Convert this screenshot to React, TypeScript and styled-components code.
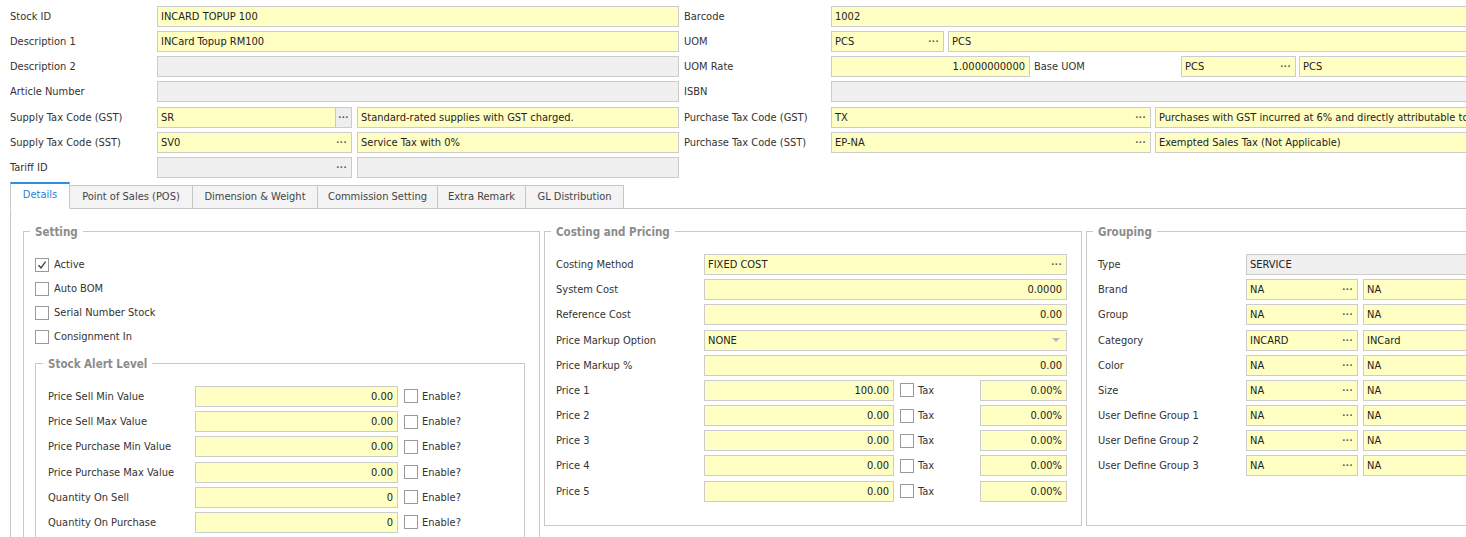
import React from "react";
import styled, { createGlobalStyle } from "styled-components";

const GlobalStyle = createGlobalStyle`
  html, body {
    margin: 0;
    padding: 0;
    background: #ffffff;
    overflow: hidden;
  }
  body {
    font-family: "DejaVu Sans Condensed", "DejaVu Sans", Tahoma, sans-serif;
    font-size: 11px;
    color: #333333;
  }
`;

const Page = styled.div`
  width: 1480px;
  height: 537px;
  overflow: hidden;
  padding: 6px 0 0 10px;
  box-sizing: border-box;
`;

const TopForm = styled.div`
  display: flex;
  gap: 5px;
`;

const FormColumn = styled.div<{ $w: number }>`
  display: flex;
  flex-direction: column;
  gap: 4.17px;
  width: ${(p) => p.$w}px;
  flex: 0 0 auto;
`;

const Row = styled.div<{ $label?: number }>`
  display: grid;
  grid-template-columns: ${(p) => p.$label ?? 147}px 1fr;
  align-items: center;
  height: 21px;
`;

const Label = styled.span`
  white-space: nowrap;
  color: #333;
`;

const Pair = styled.div<{ $first: number; $gap?: number }>`
  display: grid;
  grid-template-columns: ${(p) => p.$first}px 1fr;
  column-gap: ${(p) => p.$gap ?? 5}px;
  height: 21px;
  min-width: 0;
`;

const Field = styled.div<{ $gray?: boolean; $right?: boolean }>`
  box-sizing: border-box;
  height: 21px;
  border: 1px solid #cccccc;
  background: ${(p) => (p.$gray ? "#f0f0f0" : "#ffffc4")};
  display: flex;
  align-items: center;
  justify-content: ${(p) => (p.$right ? "flex-end" : "space-between")};
  padding: 0 4px 0 3px;
  white-space: nowrap;
  overflow: hidden;
  min-width: 0;
  color: #222;
`;

const Dots = styled.span<{ $btn?: boolean }>`
  flex: 0 0 auto;
  font-weight: bold;
  color: #555;
  font-size: 9px;
  letter-spacing: 0.5px;
  line-height: 1;
  ${(p) =>
    p.$btn
      ? `
    background: #eeeeee;
    border-left: 1px solid #c8c8c8;
    height: 19px;
    width: 15px;
    margin-right: -4px;
    display: flex;
    align-items: center;
    justify-content: center;
  `
      : ""}
`;

const Arrow = styled.span`
  width: 0;
  height: 0;
  border-left: 4px solid transparent;
  border-right: 4px solid transparent;
  border-top: 4px solid #b8b8b8;
  margin-right: 2px;
`;

const UomRateRow = styled.div`
  display: grid;
  grid-template-columns: 199px 151px 1fr;
  align-items: center;
  height: 21px;
`;

const InlineLabel = styled.span`
  padding-left: 4px;
  white-space: nowrap;
`;

/* tabs */

const TabStrip = styled.div`
  display: flex;
  align-items: flex-end;
  margin-top: 5px;
  height: 26px;
  position: relative;
  z-index: 1;
  margin-bottom: -1px;
`;

const Tab = styled.div<{ $active?: boolean; $w: number }>`
  box-sizing: border-box;
  width: ${(p) => p.$w}px;
  height: ${(p) => (p.$active ? 27 : 24)}px;
  display: flex;
  align-items: center;
  justify-content: center;
  border: 1px solid #c6c6c6;
  border-left: ${(p) => (p.$active ? "1px solid #c6c6c6" : "none")};
  border-top: ${(p) => (p.$active ? "2px solid #2f8fe3" : "1px solid #c6c6c6")};
  border-bottom: ${(p) => (p.$active ? "1px solid #ffffff" : "1px solid #c6c6c6")};
  background: ${(p) => (p.$active ? "#ffffff" : "#f3f3f3")};
  color: ${(p) => (p.$active ? "#2a7fd4" : "#444")};
  white-space: nowrap;
  padding-bottom: ${(p) => (p.$active ? 3 : 0)}px;
`;

const TabPanel = styled.div`
  border-top: 1px solid #c6c6c6;
  border-left: 1px solid #c6c6c6;
  padding: 16px 0 0 12px;
  display: flex;
  align-items: flex-start;
`;

const Group = styled.fieldset<{ $w: number; $h?: number; $mr?: number }>`
  box-sizing: border-box;
  width: ${(p) => p.$w}px;
  ${(p) => (p.$h ? `height: ${p.$h}px;` : "")}
  margin: 0 ${(p) => p.$mr ?? 0}px 0 0;
  border: 1px solid #c9c9c9;
  padding: 15px 14px 10px 11px;
  flex: 0 0 auto;
  min-width: 0;
`;

const Legend = styled.legend`
  margin-left: -5px;
  padding: 0 5px;
  font-weight: bold;
  font-size: 11.5px;
  color: #8c8c8c;
  line-height: 14px;
`;

const InnerGroup = styled.fieldset`
  box-sizing: border-box;
  margin: 11px 0 0 0;
  border: 1px solid #c9c9c9;
  padding: 15px 12px 10px 12px;
  min-width: 0;
`;

const Stack = styled.div<{ $gap: number; $top?: number }>`
  display: flex;
  flex-direction: column;
  gap: ${(p) => p.$gap}px;
  margin-top: ${(p) => p.$top ?? 0}px;
`;

const CheckRow = styled.label`
  display: flex;
  align-items: center;
  gap: 5px;
  height: 18px;
  white-space: nowrap;
`;

const Box = styled.span`
  box-sizing: border-box;
  width: 14px;
  height: 14px;
  border: 1px solid #9a9a9a;
  background: #ffffff;
  display: inline-flex;
  align-items: center;
  justify-content: center;
  flex: 0 0 auto;
`;

const AlertRow = styled.div`
  display: grid;
  grid-template-columns: 147px 203px auto;
  align-items: center;
  height: 21px;
`;

const TrailCheck = styled.div`
  display: flex;
  align-items: center;
  gap: 4px;
  padding-left: 6px;
  box-sizing: border-box;
`;

const PriceRow = styled.div`
  display: grid;
  grid-template-columns: 148px 190px 1fr 87px;
  align-items: center;
  height: 21px;
`;

const CheckBox: React.FC<{ checked?: boolean }> = ({ checked }) => (
  <Box>
    {checked && (
      <svg width="10" height="10" viewBox="0 0 10 10">
        <path d="M1.5 5.2 L4 7.8 L8.6 1.6" stroke="#444" strokeWidth="1.4" fill="none" />
      </svg>
    )}
  </Box>
);

const settingChecks = [
  { label: "Active", checked: true },
  { label: "Auto BOM" },
  { label: "Serial Number Stock" },
  { label: "Consignment In" },
];

const alerts = [
  ["Price Sell Min Value", "0.00"],
  ["Price Sell Max Value", "0.00"],
  ["Price Purchase Min Value", "0.00"],
  ["Price Purchase Max Value", "0.00"],
  ["Quantity On Sell", "0"],
  ["Quantity On Purchase", "0"],
];

const prices = [
  ["Price 1", "100.00"],
  ["Price 2", "0.00"],
  ["Price 3", "0.00"],
  ["Price 4", "0.00"],
  ["Price 5", "0.00"],
];

const groupings = [
  ["Brand", "NA", "NA"],
  ["Group", "NA", "NA"],
  ["Category", "INCARD", "INCard"],
  ["Color", "NA", "NA"],
  ["Size", "NA", "NA"],
  ["User Define Group 1", "NA", "NA"],
  ["User Define Group 2", "NA", "NA"],
  ["User Define Group 3", "NA", "NA"],
];

const tabs = [
  { label: "Details", w: 60, active: true },
  { label: "Point of Sales (POS)", w: 123 },
  { label: "Dimension & Weight", w: 125 },
  { label: "Commission Setting", w: 120 },
  { label: "Extra Remark", w: 88 },
  { label: "GL Distribution", w: 98 },
];

const App: React.FC = () => {
  return (
    <Page>
      <GlobalStyle />
      <TopForm>
        <FormColumn $w={669}>
          <Row>
            <Label>Stock ID</Label>
            <Field>INCARD TOPUP 100</Field>
          </Row>
          <Row>
            <Label>Description 1</Label>
            <Field>INCard Topup RM100</Field>
          </Row>
          <Row>
            <Label>Description 2</Label>
            <Field $gray />
          </Row>
          <Row>
            <Label>Article Number</Label>
            <Field $gray />
          </Row>
          <Row>
            <Label>Supply Tax Code (GST)</Label>
            <Pair $first={195}>
              <Field>
                SR<Dots $btn>···</Dots>
              </Field>
              <Field>Standard-rated supplies with GST charged.</Field>
            </Pair>
          </Row>
          <Row>
            <Label>Supply Tax Code (SST)</Label>
            <Pair $first={195}>
              <Field>
                SV0<Dots>···</Dots>
              </Field>
              <Field>Service Tax with 0%</Field>
            </Pair>
          </Row>
          <Row>
            <Label>Tariff ID</Label>
            <Pair $first={195}>
              <Field $gray>
                <span />
                <Dots>···</Dots>
              </Field>
              <Field $gray />
            </Pair>
          </Row>
        </FormColumn>
        <FormColumn $w={796}>
          <Row>
            <Label>Barcode</Label>
            <Field>1002</Field>
          </Row>
          <Row>
            <Label>UOM</Label>
            <Pair $first={113} $gap={4}>
              <Field>
                PCS<Dots>···</Dots>
              </Field>
              <Field>PCS</Field>
            </Pair>
          </Row>
          <Row>
            <Label>UOM Rate</Label>
            <UomRateRow>
              <Field $right>1.0000000000</Field>
              <InlineLabel>Base UOM</InlineLabel>
              <Pair $first={115} $gap={3}>
                <Field>
                  PCS<Dots>···</Dots>
                </Field>
                <Field>PCS</Field>
              </Pair>
            </UomRateRow>
          </Row>
          <Row>
            <Label>ISBN</Label>
            <Field $gray />
          </Row>
          <Row>
            <Label>Purchase Tax Code (GST)</Label>
            <Pair $first={320} $gap={4}>
              <Field>
                TX<Dots>···</Dots>
              </Field>
              <Field>Purchases with GST incurred at 6% and directly attributable to taxable supplies.</Field>
            </Pair>
          </Row>
          <Row>
            <Label>Purchase Tax Code (SST)</Label>
            <Pair $first={320} $gap={4}>
              <Field>
                EP-NA<Dots>···</Dots>
              </Field>
              <Field>Exempted Sales Tax (Not Applicable)</Field>
            </Pair>
          </Row>
        </FormColumn>
      </TopForm>

      <TabStrip>
        {tabs.map((t) => (
          <Tab key={t.label} $w={t.w} $active={t.active}>
            {t.label}
          </Tab>
        ))}
      </TabStrip>
      <TabPanel>
        <Group $w={517} $mr={4}>
          <Legend>Setting</Legend>
          <Stack $gap={6} $top={2}>
            {settingChecks.map((c) => (
              <CheckRow key={c.label}>
                <CheckBox checked={c.checked} />
                {c.label}
              </CheckRow>
            ))}
          </Stack>
          <InnerGroup>
            <Legend>Stock Alert Level</Legend>
            <Stack $gap={4.2}>
              {alerts.map(([label, value]) => (
                <AlertRow key={label}>
                  <Label>{label}</Label>
                  <Field $right>{value}</Field>
                  <TrailCheck>
                    <CheckBox />
                    Enable?
                  </TrailCheck>
                </AlertRow>
              ))}
            </Stack>
          </InnerGroup>
        </Group>

        <Group $w={538} $h={301} $mr={4}>
          <Legend>Costing and Pricing</Legend>
          <Stack $gap={4.2}>
            <Row $label={148}>
              <Label>Costing Method</Label>
              <Field>
                FIXED COST<Dots>···</Dots>
              </Field>
            </Row>
            <Row $label={148}>
              <Label>System Cost</Label>
              <Field $right>0.0000</Field>
            </Row>
            <Row $label={148}>
              <Label>Reference Cost</Label>
              <Field $right>0.00</Field>
            </Row>
            <Row $label={148}>
              <Label>Price Markup Option</Label>
              <Field>
                NONE<Arrow />
              </Field>
            </Row>
            <Row $label={148}>
              <Label>Price Markup %</Label>
              <Field $right>0.00</Field>
            </Row>
            {prices.map(([label, value]) => (
              <PriceRow key={label}>
                <Label>{label}</Label>
                <Field $right>{value}</Field>
                <TrailCheck>
                  <CheckBox />
                  Tax
                </TrailCheck>
                <Field $right>0.00%</Field>
              </PriceRow>
            ))}
          </Stack>
        </Group>

        <Group $w={420} $h={301}>
          <Legend>Grouping</Legend>
          <Stack $gap={4.2}>
            <Row $label={148}>
              <Label>Type</Label>
              <Field $gray>SERVICE</Field>
            </Row>
            {groupings.map(([label, code, desc]) => (
              <Row key={label} $label={148}>
                <Label>{label}</Label>
                <Pair $first={112} $gap={5}>
                  <Field>
                    {code}
                    <Dots>···</Dots>
                  </Field>
                  <Field>{desc}</Field>
                </Pair>
              </Row>
            ))}
          </Stack>
        </Group>
      </TabPanel>
    </Page>
  );
};

export default App;
